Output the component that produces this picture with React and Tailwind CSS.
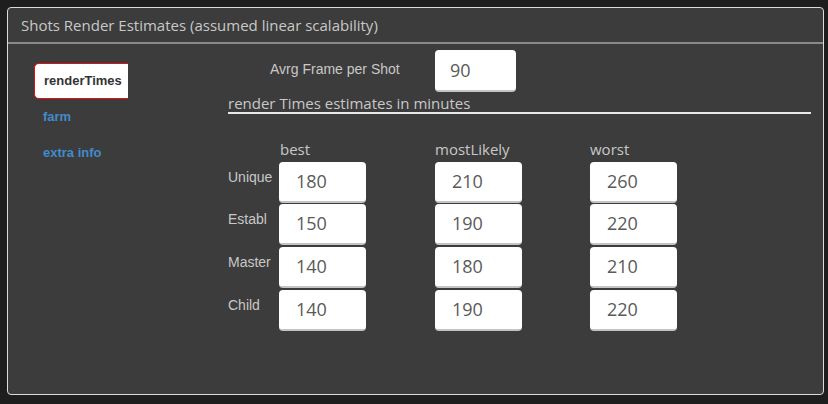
export default function App() {
  const rows = [
    { label: 'Unique', values: [180, 210, 260] },
    { label: 'Establ', values: [150, 190, 220] },
    { label: 'Master', values: [140, 180, 210] },
    { label: 'Child', values: [140, 190, 220] },
  ];
  const heads = ['best', 'mostLikely', 'worst'];

  const box =
    'w-[87px] h-[41px] bg-white rounded-[4px] border-b-2 border-[#c4c4c4] pl-[17px] flex items-center text-[18px] text-[#5a5a5a] font-["Open_Sans",sans-serif]';

  return (
    <div className="w-[828px] h-[404px] bg-[#1e1e1e] pt-[7px] pl-[7px]">
      <div className="w-[817px] h-[388px] bg-[#3c3c3c] border border-[#dcdcdc] rounded-[4px] flex flex-col">
        <div className="h-[36px] border-b-2 border-[#8a8a8a] pl-[13px] flex items-center text-[15px] text-[#c8c8c8] font-['Open_Sans',sans-serif]">
          Shots Render Estimates (assumed linear scalability)
        </div>

        <div className="flex flex-1">
          {/* tabs */}
          <div className="w-[220px] pl-[26px] pt-[19px] flex flex-col font-['Liberation_Sans',Arial,sans-serif] text-[13px] font-bold">
            <div className="w-[94px] h-[36px] bg-white border-l border-y border-[#e01010] rounded-l-[5px] flex items-center pl-[9px] text-[#333]">
              renderTimes
            </div>
            <div className="h-[36px] flex items-center pl-[9px] text-[#428bca]">farm</div>
            <div className="h-[36px] flex items-center pl-[9px] text-[#428bca]">extra info</div>
          </div>

          {/* content */}
          <div className="flex-1 pt-[6px]">
            <div className="flex items-center h-[42px]">
              <div className="w-[207px] pl-[42px] text-[14px] text-[#c8c8c8] font-['Liberation_Sans',Arial,sans-serif] -mt-[4px]">
                Avrg Frame per Shot
              </div>
              <div className="w-[81px] h-[42px] bg-white rounded-[4px] border-b-2 border-[#c4c4c4] pl-[15px] flex items-center text-[18px] text-[#5a5a5a] font-['Open_Sans',sans-serif]">
                90
              </div>
            </div>
            <div className="mr-[12px] border-b-2 border-[#e8e8e8] h-[22px] flex items-end pb-[1px] text-[15px] text-[#c8c8c8] font-['Open_Sans',sans-serif] leading-none">
              render Times estimates in minutes
            </div>

            <div className="mt-[24px] flex pl-[51px] text-[15px] text-[#c8c8c8] font-['Open_Sans',sans-serif]">
              {heads.map((h, i) => (
                <div key={h} className={i === 0 ? 'w-[156px] pl-[1px]' : 'w-[155px]'}>
                  {h}
                </div>
              ))}
            </div>

            <div className="mt-[1px] flex flex-col gap-[1.7px]">
              {rows.map((r) => (
                <div key={r.label} className="flex h-[41px]">
                  <div className="w-[51px] pt-[5px] text-[14px] text-[#c8c8c8] font-['Liberation_Sans',Arial,sans-serif]">
                    {r.label}
                  </div>
                  {r.values.map((v, i) => (
                    <div key={i} className={i === 0 ? 'w-[156px]' : 'w-[155px]'}>
                      <div className={box}>{v}</div>
                    </div>
                  ))}
                </div>
              ))}
            </div>
          </div>
        </div>
      </div>
    </div>
  );
}
